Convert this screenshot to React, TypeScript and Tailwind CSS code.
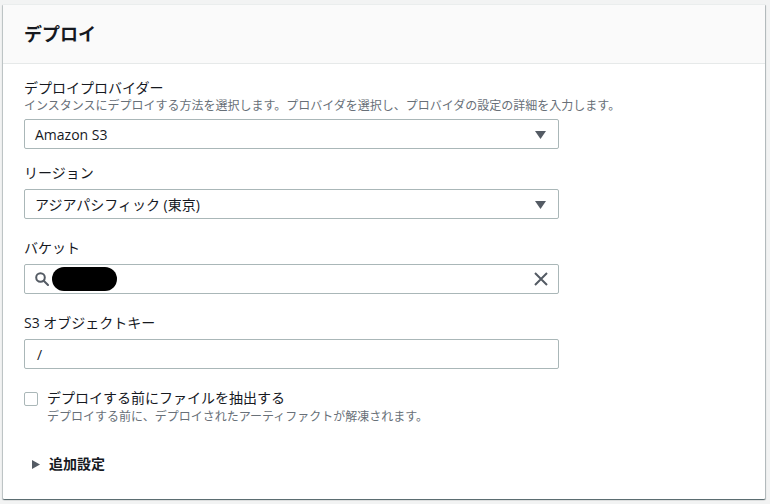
import React from 'react'

const font = { fontFamily: '"Open Sans", "Noto Sans CJK JP", sans-serif' }

function SelectBox({ value, className = 'mt-[7px]' }: { value: string; className?: string }) {
  return (
    <div
      className={
        'flex h-[30px] w-[535px] items-center justify-between rounded-[2px] border border-[#aab7b8] bg-white pl-[10px] pr-[12px] text-[14px] text-[#16191f] ' +
        className
      }
    >
      <span>{value}</span>
      <svg width="11" height="8" viewBox="0 0 11 8" className="mt-[1px]">
        <path d="M0 0 H11 L5.5 8 Z" fill="#545b64" />
      </svg>
    </div>
  )
}

function Label({ children, className = '' }: { children: React.ReactNode; className?: string }) {
  return <div className={'text-[14px] leading-[18px] text-[#16191f] ' + className}>{children}</div>
}

export default function App() {
  return (
    <div className="min-h-screen bg-[#f2f3f3] pb-[5px] pl-[3px] pr-[5px] pt-[4px]" style={font}>
      <div className="w-[762px] rounded-[1px] border-t border-[#eaeded] bg-white shadow-[0_1px_1px_0_rgba(0,28,36,0.45),1px_1px_1px_0_rgba(0,28,36,0.25),-1px_1px_1px_0_rgba(0,28,36,0.2)]">
        {/* Header */}
        <div className="flex h-[59px] items-center border-b border-[#e6e9e9] bg-[#fafafa] pl-[21px]">
          <h2 className="text-[18px] font-bold leading-[22px] text-[#16191f]">デプロイ</h2>
        </div>

        {/* Body */}
        <div className="flex flex-col pb-[26px] pl-[21px] pt-[15px]">
          {/* Provider */}
          <Label>デプロイプロバイダー</Label>
          <div className="mt-[1px] text-[12px] leading-[16px] text-[#687078]">
            インスタンスにデプロイする方法を選択します。プロバイダを選択し、プロバイダの設定の詳細を入力します。
          </div>
          <SelectBox value="Amazon S3" className="mt-[5px]" />

          {/* Region */}
          <Label className="mt-[15px]">リージョン</Label>
          <SelectBox value="アジアパシフィック (東京)" />

          {/* Bucket */}
          <Label className="mt-[20px]">バケット</Label>
          <div className="mt-[7px] flex h-[30px] w-[535px] items-center justify-between rounded-[2px] border border-[#aab7b8] bg-white pl-[10px] pr-[10px]">
            <div className="flex items-center">
              <svg width="14" height="14" viewBox="0 0 14 14" fill="none" stroke="#545b64" strokeWidth="2">
                <circle cx="5.5" cy="5.5" r="4.3" />
                <path d="M8.7 8.7 L13 13" strokeLinecap="round" />
              </svg>
              <div className="ml-[3px] h-[24px] w-[65px] rounded-full bg-black" />
            </div>
            <svg width="14" height="14" viewBox="0 0 14 14" fill="none" stroke="#545b64" strokeWidth="2">
              <path d="M1 1 L13 13 M13 1 L1 13" />
            </svg>
          </div>

          {/* S3 object key */}
          <Label className="mt-[20px]">S3 オブジェクトキー</Label>
          <div className="mt-[7px] flex h-[30px] w-[535px] items-center rounded-[2px] border border-[#aab7b8] bg-white pl-[12px] text-[14px] text-[#16191f]">
            /
          </div>

          {/* Checkbox */}
          <div className="mt-[20px] flex items-start">
            <div className="mt-[3px] h-[14px] w-[14px] rounded-[2px] border border-[#aab7b8] bg-white" />
            <div className="ml-[9px] flex flex-col">
              <Label>デプロイする前にファイルを抽出する</Label>
              <div className="mt-[2px] text-[12px] leading-[16px] text-[#687078]">
                デプロイする前に、デプロイされたアーティファクトが解凍されます。
              </div>
            </div>
          </div>

          {/* Additional settings */}
          <div className="mt-[30px] flex items-center pl-[8px]">
            <svg width="8" height="9" viewBox="0 0 8 9">
              <path d="M0 0 L8 4.5 L0 9 Z" fill="#545b64" />
            </svg>
            <span className="ml-[9px] text-[14px] font-bold leading-[18px] text-[#16191f]">追加設定</span>
          </div>
        </div>
      </div>
    </div>
  )
}
